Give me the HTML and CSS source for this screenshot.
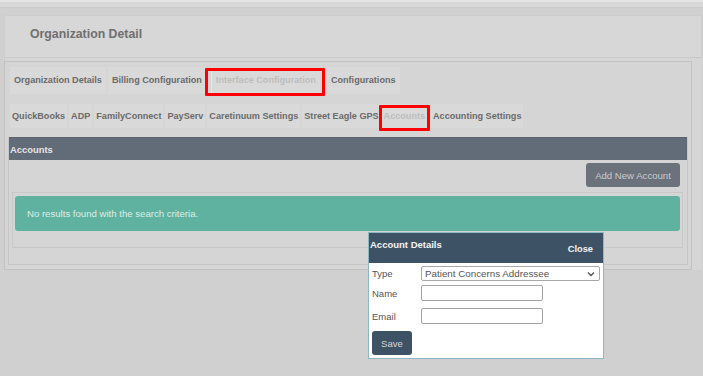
FILE: index.html
```html
<!DOCTYPE html>
<html lang="en">
<head>
<meta charset="UTF-8" />
<title>Organization Detail</title>
<link rel="stylesheet" href="styles.css">
</head>
<body>
  <div class="topline"></div>
  <div class="subbar"></div>

  <div class="wrap">
    <div class="page-header">
      <h1>Organization Detail</h1>
    </div>

    <div class="panel">
      <div class="tabs tabs-main">
        <span class="tab">Organization Details</span>
        <span class="tab">Billing Configuration</span>
        <span class="tab active marked">Interface Configuration</span>
        <span class="tab">Configurations</span>
      </div>

      <div class="tabs tabs-sub">
        <span class="tab">QuickBooks</span>
        <span class="tab">ADP</span>
        <span class="tab">FamilyConnect</span>
        <span class="tab">PayServ</span>
        <span class="tab">Caretinuum Settings</span>
        <span class="tab">Street Eagle GPS</span>
        <span class="tab active marked">Accounts</span>
        <span class="tab">Accounting Settings</span>
      </div>

      <div class="section">
        <div class="section-bar">Accounts</div>
        <div class="toolbar">
          <button class="btn-add">Add New Account</button>
        </div>
        <div class="results">
          <div class="alert">No results found with the search criteria.</div>
        </div>
      </div>
    </div>
  </div>

  <div class="modal" role="dialog" aria-label="Account Details">
    <div class="modal-head">
      <span class="modal-title">Account Details</span>
      <span class="modal-close">Close</span>
    </div>
    <div class="modal-body">
      <div class="field field-type">
        <label>Type</label>
        <div class="select">
          <span>Patient Concerns Addressee</span>
          <svg width="8" height="6" viewBox="0 0 8 6"><path d="M1 1.5 L4 4.5 L7 1.5" fill="none" stroke="#555" stroke-width="1.4"/></svg>
        </div>
      </div>
      <div class="field field-name">
        <label>Name</label>
        <input type="text" class="input">
      </div>
      <div class="field field-email">
        <label>Email</label>
        <input type="text" class="input">
      </div>
      <button class="btn-save">Save</button>
    </div>
  </div>
</body>
</html>
```

FILE: styles.css
```css
* {
  box-sizing: border-box;
  margin: 0;
  padding: 0;
}
body {
  background: #d0d0d0;
  font-family: 'Liberation Sans', Arial, sans-serif;
  color: #666;
  width: 703px;
  height: 376px;
  position: relative;
  overflow: hidden;
}
.topline {
  height: 2px;
  background: #e4e4e4;
}
.subbar {
  height: 6px;
  background: #d8d8d8;
  border-bottom: 1px solid #cbcbcb;
}
.wrap {
  margin: 7px 0 0 4px;
  width: 698px;
  background: #d6d6d6;
  border-top: 1px solid #cdcdcd;
  border-left: 1px solid #cdcdcd;
}
.page-header {
  height: 42px;
  border-bottom: 1px solid #c9c9c9;
  border-right: 1px solid #cdcdcd;
  background: #d7d7d7;
  padding: 11px 0 0 25px;
}
h1 {
  font-size: 12.3px;
  font-weight: 700;
  color: #6f6f6f;
}
.panel {
  margin: 3px 10px 0 -1px;
  border: 1px solid #c2c2c2;
  background: #d5d5d5;
  padding: 5px 3px 4px 3px;
}
.tabs {
  display: flex;
  gap: 2px;
  margin-left: 2px;
}
.tab {
  position: relative;
  background: #d9d9d9;
  font-size: 9.1px;
  font-weight: 700;
  color: #6a6a6a;
  white-space: nowrap;
}
.tabs-main {
  height: 27px;
  margin-bottom: 10px;
}
.tabs-main .tab {
  line-height: 27px;
  padding: 0 4px;
}
.tabs-sub {
  height: 24px;
  margin-bottom: 9px;
}
.tabs-sub .tab {
  line-height: 24px;
  padding: 0 2px;
}
.tab.active {
  color: #bdbdbd;
  border-left: 1px solid #e6e6e6;
}
.tabs-main .tab.active {
  margin: 0 5px 0 3px;
}
.tabs-sub .tab.active {
  margin: 0 2px 0 -2px;
}
/* red highlight boxes from the annotation */
.tab.marked::after {
  content: "";
  position: absolute;
  border: 3px solid #f00;
  border-radius: 1px;
}
.tabs-main .tab.marked::after {
  top: 1px;
  bottom: -2px;
  left: -7px;
  right: -5px;
}
.tabs-sub .tab.marked::after {
  top: 1px;
  bottom: -3px;
  left: -3px;
  right: -3px;
}
.section {
  border: 1px solid #c6c6c6;
  border-top: none;
}
.section-bar {
  height: 23px;
  line-height: 23px;
  background: #626c78;
  border-top: 1px solid #5a636e;
  color: #e4e6e8;
  font-size: 9.4px;
  font-weight: 700;
  padding-left: 1px;
}
.toolbar {
  display: flex;
  justify-content: flex-end;
  padding: 3px 7px 0 0;
  margin-bottom: 5px;
}
.btn-add {
  height: 24px;
  width: 94px;
  border: none;
  border-radius: 3px;
  background: #6b727c;
  color: #c9ccd0;
  font-family: inherit;
  font-size: 9.6px;
}
.results {
  margin: 0 4px 16px 3px;
  border: 1px solid #c8c8c8;
  padding: 3px 2px 16px 2px;
}
.alert {
  height: 35px;
  line-height: 35px;
  background: #5fb2a0;
  border-radius: 3px;
  color: #dbeee8;
  font-size: 9.6px;
  padding-left: 12px;
}
/* Account details popup */
.modal {
  position: absolute;
  left: 368px;
  top: 232px;
  width: 236px;
  height: 127px;
  background: #fff;
  border: 1px solid #8fb6c5;
}
.modal-head {
  height: 30px;
  background: #3e5266;
  display: flex;
  justify-content: space-between;
  align-items: flex-start;
  color: #f2f4f6;
  font-weight: 700;
  padding: 6px 10px 0 1px;
}
.modal-title {
  font-size: 9.5px;
}
.modal-close {
  font-size: 9.3px;
  margin-top: 5px;
}
.modal-body {
  padding: 3px 3px 0 3px;
}
.field {
  display: flex;
  align-items: center;
}
.field label {
  width: 49px;
  font-size: 9.5px;
  color: #555;
}
.field-type {
  height: 15px;
  margin-bottom: 4px;
}
.field-name {
  height: 16px;
  margin-bottom: 7px;
}
.field-email {
  height: 16px;
  margin-bottom: 7px;
}
.select {
  width: 179px;
  height: 15px;
  border: 1px solid #a8a8a8;
  border-radius: 2px;
  display: flex;
  align-items: center;
  justify-content: space-between;
  padding: 0 4px 0 3px;
  font-size: 9.8px;
  color: #555;
}
.input {
  width: 122px;
  height: 16px;
  border: 1px solid #a3a3a3;
  border-radius: 2px;
  outline: none;
}
.btn-save {
  width: 40px;
  height: 24px;
  border: none;
  border-radius: 3px;
  background: #3e5266;
  color: #d2d8de;
  font-family: inherit;
  font-size: 9.6px;
}
```
